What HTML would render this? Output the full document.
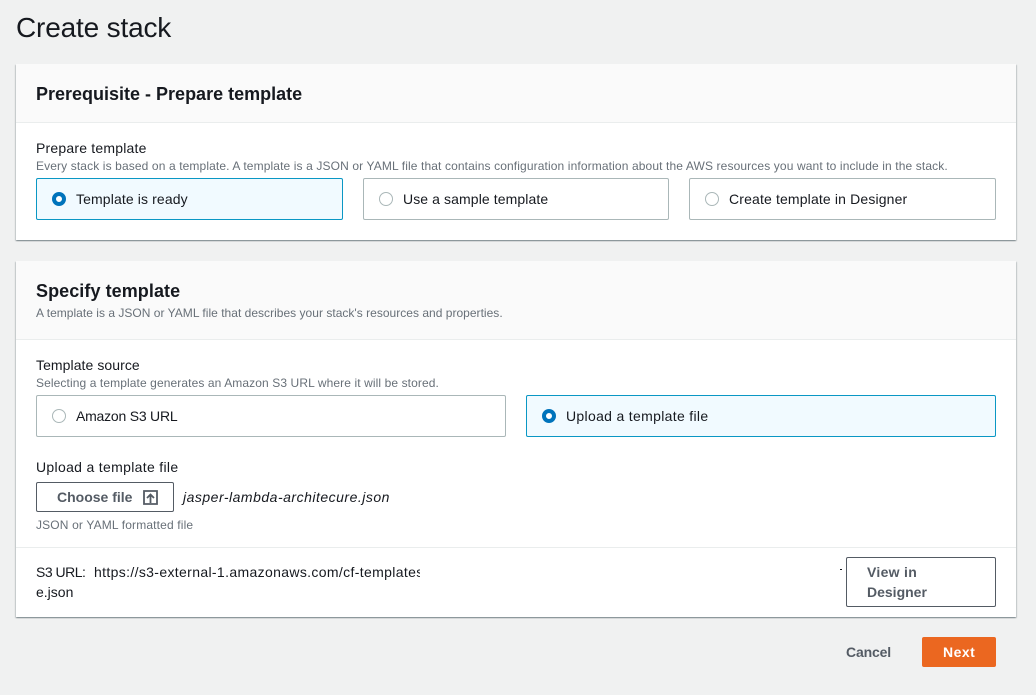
<!DOCTYPE html>
<html><head><meta charset="utf-8"><style>
html,body{margin:0;padding:0}
body{width:1036px;height:695px;background:#f0f1f1;position:relative;overflow:hidden;font-family:"Liberation Sans",sans-serif;color:#16191f}
.t{position:absolute;white-space:nowrap;line-height:20px}
.card{position:absolute;left:16px;width:1000px;background:#fff;box-shadow:0 1px 1px 0 rgba(0,28,36,.3),1px 1px 1px 0 rgba(0,28,36,.15),-1px 1px 1px 0 rgba(0,28,36,.15)}
.hd{position:absolute;left:0;top:0;width:1000px;background:#fafafa;border-bottom:1px solid #eaeded;box-sizing:content-box}
.box{position:absolute;box-sizing:border-box;height:42px;border:1px solid #aab7b8;border-radius:2px;background:#fff}
.box.s{border-color:#0a97c4;background:#f1faff}
.r{position:absolute;width:14px;height:14px;box-sizing:border-box;border-radius:50%;border:1px solid #aab7b8;background:#fff}
.r.s{border:4px solid #0073bb}
.h{font-size:18px;font-weight:bold}
.l{font-size:14px}
.d{font-size:12px;color:#687078}
.b{font-size:14px;font-weight:bold;color:#545b64}
.btn{position:absolute;box-sizing:border-box;border:1px solid #545b64;border-radius:2px;background:#fff}
</style></head><body>
<div class="t" style="left:16px;top:12px;font-size:28px;line-height:32px;letter-spacing:-.17px">Create stack</div>

<div class="card" style="top:64px;height:176px">
<div class="hd" style="height:58px"></div>
</div>
<div class="t h" style="left:36px;top:84px">Prerequisite - Prepare template</div>
<div class="t l" style="left:36px;top:138px;letter-spacing:.2px">Prepare template</div>
<div class="t d" style="left:36px;top:156px;letter-spacing:.12px">Every stack is based on a template. A template is a JSON or YAML file that contains configuration information about the AWS resources you want to include in the stack.</div>
<div class="box s" style="left:36px;top:178px;width:307px"></div>
<div class="r s" style="left:52px;top:192px"></div>
<div class="t l" style="left:76px;top:189px;letter-spacing:.12px">Template is ready</div>
<div class="box" style="left:363px;top:178px;width:306px"></div>
<div class="r" style="left:379px;top:192px"></div>
<div class="t l" style="left:403px;top:189px;letter-spacing:.1px">Use a sample template</div>
<div class="box" style="left:689px;top:178px;width:307px"></div>
<div class="r" style="left:705px;top:192px"></div>
<div class="t l" style="left:729px;top:189px;letter-spacing:.15px">Create template in Designer</div>

<div class="card" style="top:261px;height:356px">
<div class="hd" style="height:78px"></div>
<div style="position:absolute;left:0;top:286px;width:1000px;height:1px;background:#eaeded"></div>
</div>
<div class="t h" style="left:36px;top:281px;letter-spacing:.07px">Specify template</div>
<div class="t d" style="left:36px;top:303px;letter-spacing:.02px">A template is a JSON or YAML file that describes your stack's resources and properties.</div>
<div class="t l" style="left:36px;top:355px;letter-spacing:.07px">Template source</div>
<div class="t d" style="left:36px;top:373px;letter-spacing:.1px">Selecting a template generates an Amazon S3 URL where it will be stored.</div>
<div class="box" style="left:36px;top:395px;width:470px"></div>
<div class="r" style="left:52px;top:409px"></div>
<div class="t l" style="left:76px;top:406px;letter-spacing:-.22px">Amazon S3 URL</div>
<div class="box s" style="left:526px;top:395px;width:470px"></div>
<div class="r s" style="left:542px;top:409px"></div>
<div class="t l" style="left:566px;top:406px;letter-spacing:.32px">Upload a template file</div>

<div class="t l" style="left:36px;top:457px;letter-spacing:.32px">Upload a template file</div>
<div class="btn" style="left:36px;top:482px;width:138px;height:30px"></div>
<div class="t b" style="left:57px;top:487px">Choose file</div>
<svg style="position:absolute;left:143px;top:490px" width="15" height="15" viewBox="0 0 15 15" fill="none" stroke="#545b64" stroke-width="1.8"><path d="M1 1h13v13H1z"/><path d="M7.5 13V5M4 8l3.5-3.5L11 8"/></svg>
<div class="t l" style="left:183px;top:487px;font-style:italic;letter-spacing:.5px">jasper-lambda-architecure.json</div>
<div class="t d" style="left:36px;top:515px;letter-spacing:.15px">JSON or YAML formatted file</div>

<div class="t l" style="left:36px;top:562px;letter-spacing:-.5px">S3 URL:</div>
<div class="t l" style="left:94px;top:562px;width:326px;overflow:hidden;letter-spacing:.35px">https://s3-external-1.amazonaws.com/cf-templates-1a2b3c4d5e6f</div>
<div class="t l" style="left:36px;top:582px">e.json</div>
<div style="position:absolute;left:840px;top:569px;width:2px;height:1px;background:#16191f"></div>
<div class="btn" style="left:846px;top:557px;width:150px;height:50px"></div>
<div class="t b" style="left:867px;top:562px;letter-spacing:.3px">View in</div>
<div class="t b" style="left:867px;top:582px">Designer</div>

<div class="t b" style="left:846px;top:642px;letter-spacing:-.15px">Cancel</div>
<div style="position:absolute;left:922px;top:637px;width:74px;height:30px;background:#eb6720;border-radius:2px"></div>
<div class="t b" style="left:943px;top:642px;color:#fff;letter-spacing:.5px">Next</div>
</body></html>
